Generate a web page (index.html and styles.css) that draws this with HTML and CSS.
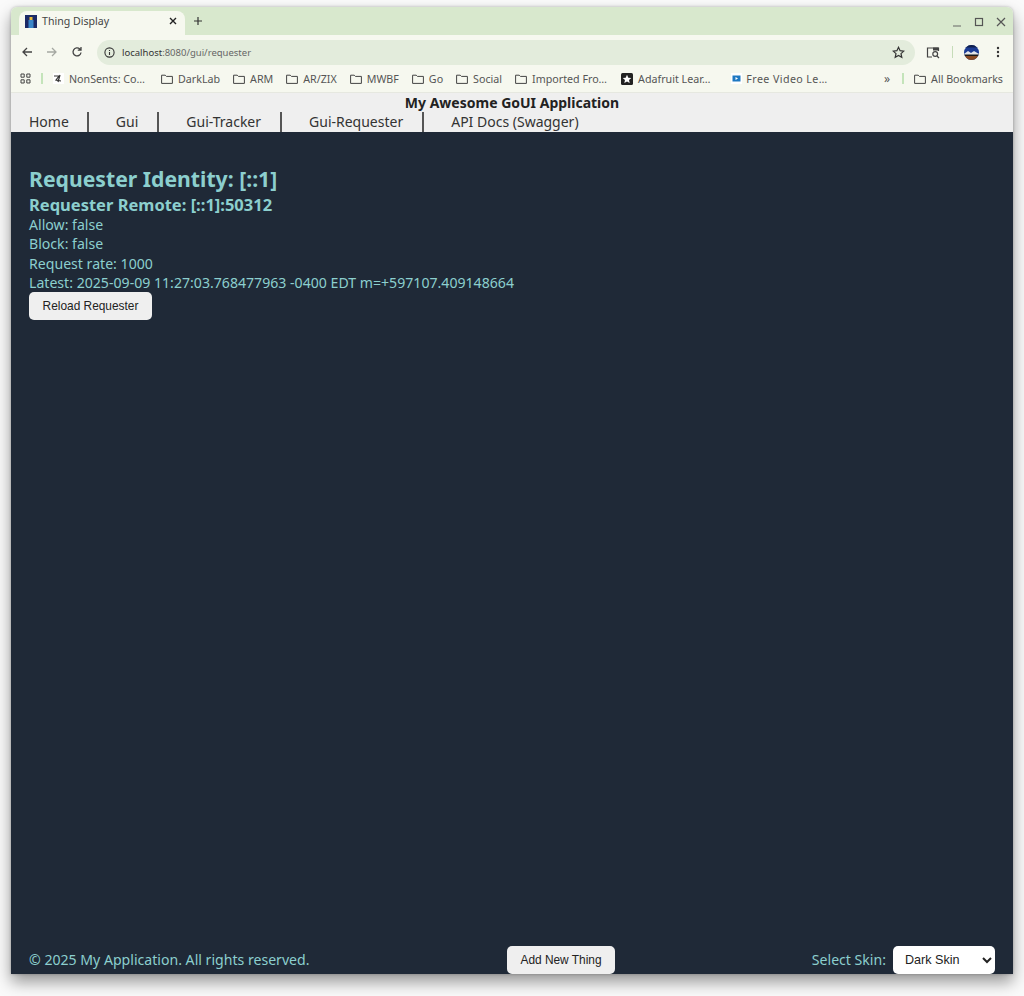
FILE: index.html
```html
<!DOCTYPE html>
<html lang="en">
<head>
<meta charset="utf-8">
<title>Thing Display</title>
<link rel="stylesheet" href="styles.css">
</head>
<body>
<div class="window">
  <div class="tabbar">
    <div class="tab">
      <svg class="favicon" width="12" height="13" viewBox="0 0 12 13"><rect width="12" height="13" fill="#1b2a66"/><rect x="4.500" y="2" width="3" height="3" fill="#e8b93a"/><rect x="3.500" y="5" width="5" height="8" fill="#3a86c8"/></svg>
      <span class="tab-title">Thing Display</span>
      <svg class="tab-close" width="10" height="10" viewBox="0 0 10 10"><path d="M2 2l6 6M8 2l-6 6" stroke="#222" stroke-width="1.4" fill="none"/></svg>
    </div>
    <svg class="new-tab" width="10" height="10" viewBox="0 0 10 10"><path d="M5 1v8M1 5h8" stroke="#333" stroke-width="1.2" fill="none"/></svg>
    <div class="win-controls">
      <svg width="10" height="10" viewBox="0 0 10 10"><path d="M1 9h8" stroke="#666" stroke-width="1.2" fill="none"/></svg>
      <svg width="10" height="10" viewBox="0 0 10 10"><rect x="1.500" y="1.500" width="7" height="7" stroke="#555" stroke-width="1.2" fill="none"/></svg>
      <svg width="10" height="10" viewBox="0 0 10 10"><path d="M1 1l8 8M9 1l-8 8" stroke="#555" stroke-width="1.2" fill="none"/></svg>
    </div>
  </div>
  <div class="toolbar">
    <svg class="tb-btn" width="12" height="12" viewBox="0 0 12 12"><path d="M11 6H2M6 2L2 6l4 4" stroke="#444" stroke-width="1.3" fill="none"/></svg>
    <svg class="tb-btn" width="12" height="12" viewBox="0 0 12 12"><path d="M1 6h9M6 2l4 4-4 4" stroke="#a5a8a2" stroke-width="1.3" fill="none"/></svg>
    <svg class="tb-btn" width="12" height="12" viewBox="0 0 12 12"><path d="M10 6.500A4 4 0 1 1 8.800 3L10 4.200M10 1v3.200H6.800" stroke="#444" stroke-width="1.3" fill="none"/></svg>
    <div class="omnibox">
      <svg width="11" height="11" viewBox="0 0 11 11"><circle cx="5.500" cy="5.500" r="4.600" stroke="#333" stroke-width="1.100" fill="none"/><path d="M5.500 5v3M5.500 3v1" stroke="#333" stroke-width="1.100"/></svg>
      <span class="url"><span class="url-host">localhost</span>:8080/gui/requester</span>
      <svg class="star" width="13" height="13" viewBox="0 0 13 13"><path d="M6.500 1.300l1.600 3.400 3.700.4-2.800 2.500.8 3.700-3.300-1.900-3.300 1.900.8-3.700L1.200 5.100l3.700-.4z" stroke="#333" stroke-width="1.200" fill="none"/></svg>
    </div>
    <svg class="tb-search" width="14" height="13" viewBox="0 0 14 13"><path d="M6 11H1.500V2h11v3" stroke="#444" stroke-width="1.200" fill="none"/><rect x="7" y="1.500" width="5.500" height="3" fill="#444"/><circle cx="9.200" cy="8" r="2.400" stroke="#444" stroke-width="1.200" fill="none"/><path d="M11 10l2 2" stroke="#444" stroke-width="1.200"/></svg>
    <span class="tb-sep"></span>
    <svg class="avatar" width="15" height="15" viewBox="0 0 15 15"><defs><clipPath id="av"><circle cx="7.500" cy="7.500" r="7.500"/></clipPath></defs><g clip-path="url(#av)"><rect width="15" height="15" fill="#1c3c94"/><path d="M0 9l4-3 3 2 3-2 5 3v2H0z" fill="#e3e6ea"/><rect y="10.500" width="15" height="4.500" fill="#8a4a22"/><rect y="0" width="15" height="2.500" fill="#10204c"/><rect y="9.500" width="15" height="1.500" fill="#1a1a1a"/></g></svg>
    <svg class="kebab" width="4" height="12" viewBox="0 0 4 12"><circle cx="2" cy="2" r="1.200" fill="#333"/><circle cx="2" cy="6" r="1.200" fill="#333"/><circle cx="2" cy="10" r="1.200" fill="#333"/></svg>
  </div>
  <div class="bookmarks">
    <svg class="apps" width="11" height="11" viewBox="0 0 11 11"><path d="M1 1h3.200v3.200H1zM6.800 1H10v3.200H6.800zM1 6.800h3.200V10H1zM6.800 6.800H10V10H6.800z" stroke="#444" fill="none"/></svg>
    <span class="bm-sep"></span>
    <span class="bm bm-nonsents"><svg width="11" height="11" viewBox="0 0 11 11"><rect width="11" height="11" fill="#fff"/><path d="M1 3h5L3 7l5 1M7 2L5 9" stroke="#333" stroke-width="1.200" fill="none"/></svg>NonSents: Co…</span>
    <span class="bm"><svg class="folder" width="12" height="10" viewBox="0 0 12 10"><path d="M.6 1.200h3.600l1.200 1.200h6v7H.6z" stroke="#444" fill="none"/></svg>DarkLab</span>
    <span class="bm"><svg class="folder" width="12" height="10" viewBox="0 0 12 10"><path d="M.6 1.200h3.600l1.200 1.200h6v7H.6z" stroke="#444" fill="none"/></svg>ARM</span>
    <span class="bm"><svg class="folder" width="12" height="10" viewBox="0 0 12 10"><path d="M.6 1.200h3.600l1.200 1.200h6v7H.6z" stroke="#444" fill="none"/></svg>AR/ZIX</span>
    <span class="bm"><svg class="folder" width="12" height="10" viewBox="0 0 12 10"><path d="M.6 1.200h3.600l1.200 1.200h6v7H.6z" stroke="#444" fill="none"/></svg>MWBF</span>
    <span class="bm"><svg class="folder" width="12" height="10" viewBox="0 0 12 10"><path d="M.6 1.200h3.600l1.200 1.200h6v7H.6z" stroke="#444" fill="none"/></svg>Go</span>
    <span class="bm"><svg class="folder" width="12" height="10" viewBox="0 0 12 10"><path d="M.6 1.200h3.600l1.200 1.200h6v7H.6z" stroke="#444" fill="none"/></svg>Social</span>
    <span class="bm"><svg class="folder" width="12" height="10" viewBox="0 0 12 10"><path d="M.6 1.200h3.600l1.200 1.200h6v7H.6z" stroke="#444" fill="none"/></svg>Imported Fro…</span>
    <span class="bm bm-ada"><svg width="12" height="12" viewBox="0 0 12 12"><rect width="12" height="12" rx="1.500" fill="#222"/><path d="M6 1.800l1.300 2.900 3 .3-2.300 2 .7 3L6 8.500 3.300 10l.7-3-2.300-2 3-.3z" fill="#fff"/></svg>Adafruit Lear…</span>
    <span class="bm bm-video"><svg width="11" height="11" viewBox="0 0 11 11"><rect width="11" height="11" fill="#fff"/><rect x="1.500" y="2.500" width="8" height="6" fill="#1e78c2"/><path d="M4.500 4v3l2.500-1.500z" fill="#fff"/></svg>Free Video Le…</span>
    <span class="bm-more">»</span>
    <span class="bm-sep"></span>
    <span class="bm bm-all"><svg class="folder" width="12" height="10" viewBox="0 0 12 10"><path d="M.6 1.200h3.600l1.200 1.200h6v7H.6z" stroke="#444" fill="none"/></svg>All Bookmarks</span>
  </div>
  <header class="app-header">
    <div class="app-title">My Awesome GoUI Application</div>
    <nav class="nav">
      <a class="nav-link">Home</a>
      <a class="nav-link">Gui</a>
      <a class="nav-link">Gui-Tracker</a>
      <a class="nav-link">Gui-Requester</a>
      <a class="nav-link">API Docs (Swagger)</a>
    </nav>
  </header>
  <main class="content">
    <div class="panel">
      <h1 class="identity">Requester Identity: [::1]</h1>
      <h2 class="remote">Requester Remote: [::1]:50312</h2>
      <div class="line">Allow: false</div>
      <div class="line">Block: false</div>
      <div class="line">Request rate: 1000</div>
      <div class="line">Latest: 2025-09-09 11:27:03.768477963 -0400 EDT m=+597107.409148664</div>
      <button class="btn btn-reload">Reload Requester</button>
    </div>
    <footer class="footer">
      <span class="copy">© 2025 My Application. All rights reserved.</span>
      <button class="btn btn-add">Add New Thing</button>
      <label class="skin">Select Skin:
        <select class="skin-select"><option>Dark Skin</option></select>
      </label>
    </footer>
  </main>
</div>
</body>
</html>
```
FILE: styles.css
```css
* { box-sizing: border-box; }
html, body { margin: 0; height: 100%; }
body {
  background: #fafafa;
  padding: 7px 11px 22px 11px;
  overflow: hidden;
  font-family: "Noto Sans", sans-serif;
}
.window {
  height: 967px;
  display: flex;
  flex-direction: column;
  border-radius: 6px 6px 0 0;
  overflow: hidden;
  box-shadow: 0 8px 16px rgba(0,0,0,.4), 0 0 3px rgba(0,0,0,.25);
}
.tabbar {
  height: 28px;
  background: #d8e8cd;
  display: flex;
  align-items: flex-end;
  padding-left: 8px;
  flex: none;
}
.tab {
  width: 166px;
  height: 24px;
  background: #f6f8ef;
  border-radius: 8px 8px 0 0;
  display: flex;
  align-items: center;
  padding: 0 7px 0 6px;
  font-size: 10.600px;
  color: #444;
  gap: 5px;
}
.favicon { flex: none; margin-bottom: 3px; }
.tab-title { flex: 1; margin-bottom: 4px; }
.tab-close { flex: none; margin-bottom: 4px; }
.new-tab { margin: 0 0 9px 8px; }
.win-controls {
  margin-left: auto;
  display: flex;
  gap: 12px;
  padding-right: 7px;
  margin-bottom: 8px;
}
.toolbar {
  height: 30px;
  background: #f6f8ef;
  display: flex;
  align-items: center;
  flex: none;
  padding: 4px 0 0 10px;
}
.tb-btn { margin-right: 13px; flex: none; }
.omnibox {
  width: 818px;
  height: 25px;
  margin-left: 1px;
  background: #e3ecdc;
  border-radius: 13px;
  display: flex;
  align-items: center;
  padding: 0 10px 0 7px;
  font-size: 9.500px;
  color: #666;
}
.url { margin-left: 7px; flex: 1; }
.url-host { color: #333; }
.tb-search { margin-left: 11px; flex: none; }
.tb-sep { width: 1px; height: 12px; background: #c6dcb9; margin: 0 11px 0 12px; flex: none; }
.avatar { flex: none; }
.kebab { margin-left: 17px; flex: none; }
.bookmarks {
  height: 28px;
  background: #f6f8ef;
  border-bottom: 1px solid #e6e8e0;
  display: flex;
  align-items: center;
  padding: 0 10px 0 9px;
  font-size: 10.700px;
  color: #555;
  flex: none;
}
.apps { flex: none; }
.bm-sep { width: 2px; height: 11px; background: #c4e4ba; margin: 0 10px; flex: none; }
.bm { display: flex; align-items: center; gap: 5px; margin-right: 13px; white-space: nowrap; }
.bm-nonsents { margin-right: 16px; }
.bm-ada { margin-left: 1px; margin-right: 21px; }
.bm-video { margin-right: 0; letter-spacing: .4px; gap: 4px; }
.bm-more { margin-left: auto; margin-right: 2px; font-size: 12px; }
.bm-all { margin-right: 0; }
.app-header {
  background: #efefef;
  height: 39px;
  flex: none;
  color: #222;
}
.app-title {
  text-align: center;
  font-weight: 700;
  font-size: 14px;
  line-height: 19px;
}
.nav { display: flex; height: 20px; }
.nav-link {
  font-size: 14px;
  line-height: 20px;
  padding: 0 19px 0 27px;
  border-right: 2px solid #555;
  color: #333;
}
.nav-link:first-child { padding-left: 18px; padding-right: 18px; }
.nav-link:last-child { border-right: 0; }
.content {
  flex: 1;
  min-height: 0;
  background: #1f2937;
  color: #8ccfce;
  display: flex;
  flex-direction: column;
  padding: 0 18px;
}
.panel { flex: 1; padding-top: 32px; }
.identity { margin: 0; font-size: 21.200px; line-height: 30px; font-weight: 700; }
.remote { margin: 0; font-size: 16.500px; line-height: 21px; font-weight: 700; }
.line { font-size: 14.120px; line-height: 19.300px; }
.btn {
  display: block;
  height: 28px;
  border: 0;
  border-radius: 5px;
  background: #efefef;
  color: #222;
  font-family: "Liberation Sans", Arial, sans-serif;
  font-size: 11.900px;
  padding: 0;
  white-space: nowrap;
}
.btn-reload { width: 123px; }
.footer {
  height: 28px;
  display: flex;
  align-items: center;
  justify-content: space-between;
  flex: none;
  font-size: 14.100px;
  color: #8ccfce;
}
.copy { width: 281px; margin-bottom: 1px; }
.btn-add { width: 108px; margin-left: 197px; }
.skin { margin-left: auto; display: flex; align-items: flex-start; gap: 7px; line-height: 27px; }
.skin-select {
  width: 102px;
  height: 28px;
  border: 0;
  border-radius: 5px;
  background: #fff;
  color: #222;
  font-family: "Liberation Sans", Arial, sans-serif;
  font-size: 12.600px;
  padding-left: 8px;
}
```
